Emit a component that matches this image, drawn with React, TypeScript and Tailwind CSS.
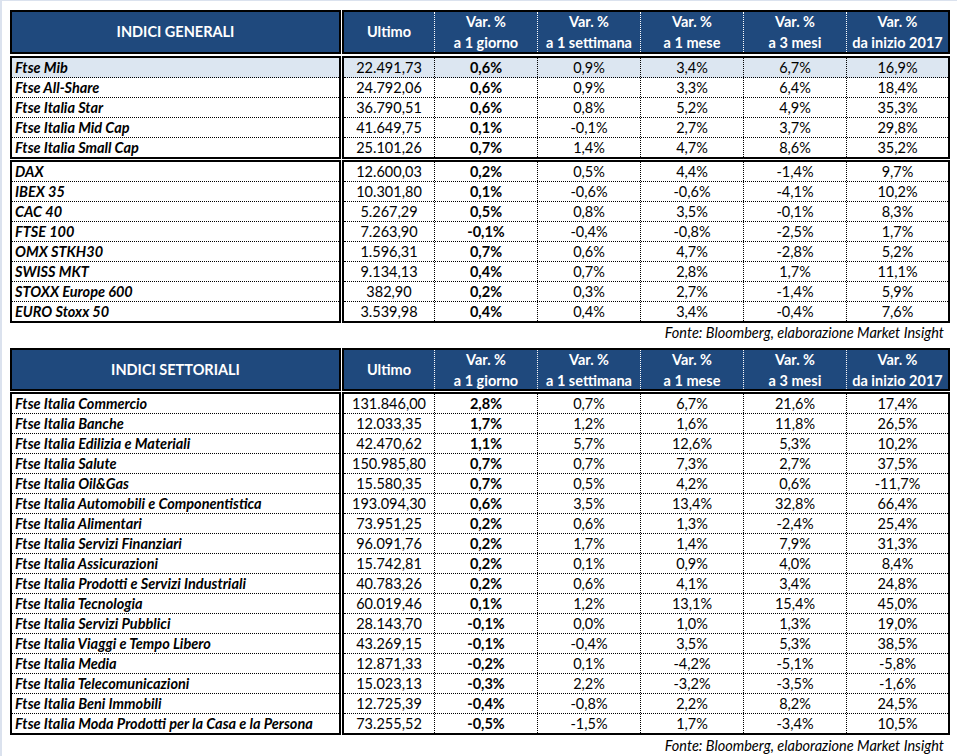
type Row = [string, string, string, string, string, string, string]

const GENERALI_IT: Row[] = [
  ['Ftse Mib', '22.491,73', '0,6%', '0,9%', '3,4%', '6,7%', '16,9%'],
  ['Ftse All-Share', '24.792,06', '0,6%', '0,9%', '3,3%', '6,4%', '18,4%'],
  ['Ftse Italia Star', '36.790,51', '0,6%', '0,8%', '5,2%', '4,9%', '35,3%'],
  ['Ftse Italia Mid Cap', '41.649,75', '0,1%', '-0,1%', '2,7%', '3,7%', '29,8%'],
  ['Ftse Italia Small Cap', '25.101,26', '0,7%', '1,4%', '4,7%', '8,6%', '35,2%'],
]

const GENERALI_EU: Row[] = [
  ['DAX', '12.600,03', '0,2%', '0,5%', '4,4%', '-1,4%', '9,7%'],
  ['IBEX 35', '10.301,80', '0,1%', '-0,6%', '-0,6%', '-4,1%', '10,2%'],
  ['CAC 40', '5.267,29', '0,5%', '0,8%', '3,5%', '-0,1%', '8,3%'],
  ['FTSE 100', '7.263,90', '-0,1%', '-0,4%', '-0,8%', '-2,5%', '1,7%'],
  ['OMX STKH30', '1.596,31', '0,7%', '0,6%', '4,7%', '-2,8%', '5,2%'],
  ['SWISS MKT', '9.134,13', '0,4%', '0,7%', '2,8%', '1,7%', '11,1%'],
  ['STOXX Europe 600', '382,90', '0,2%', '0,3%', '2,7%', '-1,4%', '5,9%'],
  ['EURO Stoxx 50', '3.539,98', '0,4%', '0,4%', '3,4%', '-0,4%', '7,6%'],
]

const SETTORIALI: Row[] = [
  ['Ftse Italia Commercio', '131.846,00', '2,8%', '0,7%', '6,7%', '21,6%', '17,4%'],
  ['Ftse Italia Banche', '12.033,35', '1,7%', '1,2%', '1,6%', '11,8%', '26,5%'],
  ['Ftse Italia Edilizia e Materiali', '42.470,62', '1,1%', '5,7%', '12,6%', '5,3%', '10,2%'],
  ['Ftse Italia Salute', '150.985,80', '0,7%', '0,7%', '7,3%', '2,7%', '37,5%'],
  ['Ftse Italia Oil&Gas', '15.580,35', '0,7%', '0,5%', '4,2%', '0,6%', '-11,7%'],
  ['Ftse Italia Automobili e Componentistica', '193.094,30', '0,6%', '3,5%', '13,4%', '32,8%', '66,4%'],
  ['Ftse Italia Alimentari', '73.951,25', '0,2%', '0,6%', '1,3%', '-2,4%', '25,4%'],
  ['Ftse Italia Servizi Finanziari', '96.091,76', '0,2%', '1,7%', '1,4%', '7,9%', '31,3%'],
  ['Ftse Italia Assicurazioni', '15.742,81', '0,2%', '0,1%', '0,9%', '4,0%', '8,4%'],
  ['Ftse Italia Prodotti e Servizi Industriali', '40.783,26', '0,2%', '0,6%', '4,1%', '3,4%', '24,8%'],
  ['Ftse Italia Tecnologia', '60.019,46', '0,1%', '1,2%', '13,1%', '15,4%', '45,0%'],
  ['Ftse Italia Servizi Pubblici', '28.143,70', '-0,1%', '0,0%', '1,0%', '1,3%', '19,0%'],
  ['Ftse Italia Viaggi e Tempo Libero', '43.269,15', '-0,1%', '-0,4%', '3,5%', '5,3%', '38,5%'],
  ['Ftse Italia Media', '12.871,33', '-0,2%', '0,1%', '-4,2%', '-5,1%', '-5,8%'],
  ['Ftse Italia Telecomunicazioni', '15.023,13', '-0,3%', '2,2%', '-3,2%', '-3,5%', '-1,6%'],
  ['Ftse Italia Beni Immobili', '12.725,39', '-0,4%', '-0,8%', '2,2%', '8,2%', '24,5%'],
  ['Ftse Italia Moda Prodotti per la Casa e la Persona', '73.255,52', '-0,5%', '-1,5%', '1,7%', '-3,4%', '10,5%'],
]

// widths include the 1px dotted separator on the right
const COLS = ['w-[91px]', 'w-[103px]', 'w-[103px]', 'w-[103px]', 'w-[103px]', 'w-[101px]']

const HEAD_COLS: [string, string][] = [
  ['Var. %', 'a 1 giorno'],
  ['Var. %', 'a 1 settimana'],
  ['Var. %', 'a 1 mese'],
  ['Var. %', 'a 3 mesi'],
  ['Var. %', 'da inizio 2017'],
]

function Header({ title, className = '' }: { title: string; className?: string }) {
  return (
    <div className={`flex font-bold text-white ${className}`}>
      <div className="w-[331px] border-2 border-black bg-[#1f497d] flex items-center justify-center">
        {title}
      </div>
      <div className="ml-px w-[608px] border-2 border-black bg-[#1f497d] flex">
        <div className={`${COLS[0]} border-r border-dotted border-white flex items-center justify-center`}>
          Ultimo
        </div>
        {HEAD_COLS.map(([a, b], j) => (
          <div
            key={b}
            className={`${COLS[j + 1]} ${j < 4 ? 'border-r border-dotted border-white' : ''} flex flex-col items-center justify-center leading-[21px]`}
          >
            <span>{a}</span>
            <span>{b}</span>
          </div>
        ))}
      </div>
    </div>
  )
}

function Block({ rows, highlight = false, className = '' }: { rows: Row[]; highlight?: boolean; className?: string }) {
  return (
    <div className={`flex ${className}`}>
      <div className="w-[331px] border-2 border-black">
        {rows.map((r, i) => (
          <div
            key={r[0]}
            className={`h-5 last:h-[19px] flex items-center pl-[3px] font-bold italic border-b border-dotted border-black last:border-b-0 ${highlight && i === 0 ? 'bg-[#dce6f1]' : ''}`}
          >
            {r[0]}
          </div>
        ))}
      </div>
      <div className="ml-px w-[608px] border-2 border-black">
        {rows.map((r, i) => (
          <div
            key={r[0]}
            className={`flex h-5 last:h-[19px] border-b border-dotted border-black last:border-b-0 ${highlight && i === 0 ? 'bg-[#dce6f1]' : ''}`}
          >
            {r.slice(1).map((v, j) => (
              <div
                key={j}
                className={`${COLS[j]} flex items-center justify-center ${j < 5 ? 'border-r border-dotted border-black' : ''} ${j === 1 ? 'font-bold' : ''}`}
              >
                {v}
              </div>
            ))}
          </div>
        ))}
      </div>
    </div>
  )
}

function Fonte({ className = '' }: { className?: string }) {
  return (
    <div className={`w-[940px] text-right pr-[6px] italic leading-5 ${className}`}>
      Fonte: Bloomberg, elaborazione Market Insight
    </div>
  )
}

export default function App() {
  return (
    <div className="w-[957px] h-[756px] bg-white border-t border-l-2 border-[#dbe2ee] pl-2 pt-[9px] text-[14.5px] text-black font-['Lato','Liberation_Sans',sans-serif] overflow-hidden">
      <Header title="INDICI GENERALI" className="h-[44px]" />
      <Block rows={GENERALI_IT} highlight className="mt-[2px]" />
      <Block rows={GENERALI_EU} className="mt-px" />
      <Fonte className="h-[25px]" />
      <Header title="INDICI SETTORIALI" className="h-[43px]" />
      <Block rows={SETTORIALI} className="mt-px" />
      <Fonte className="mt-px" />
    </div>
  )
}
